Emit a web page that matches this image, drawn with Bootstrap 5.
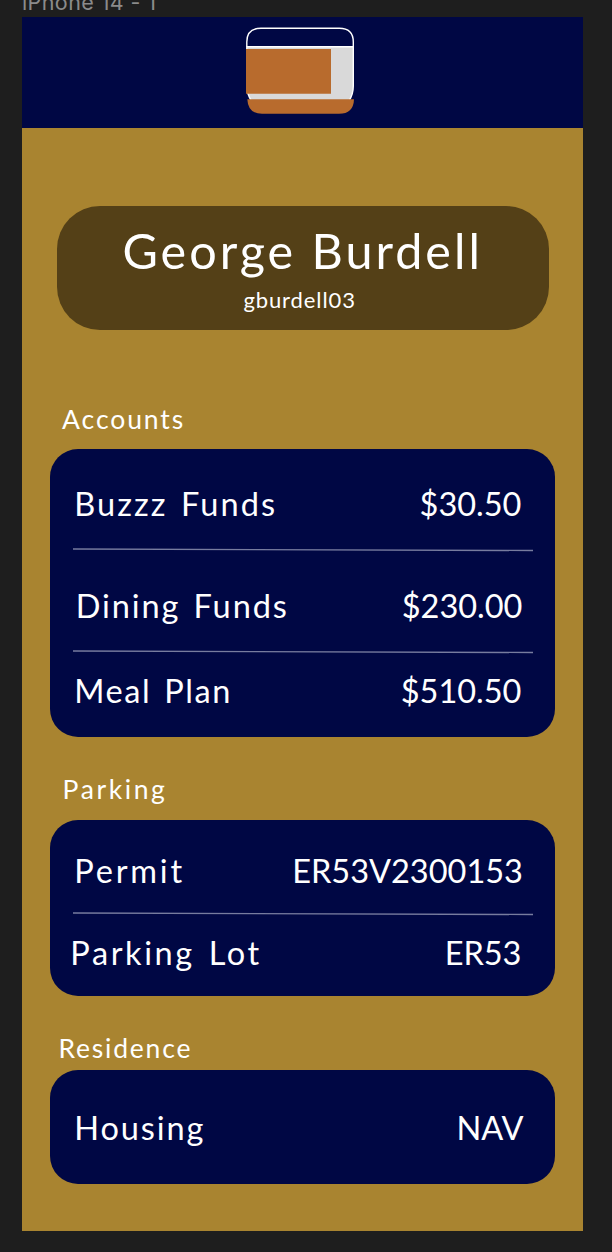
<!DOCTYPE html>
<html lang="en">
<head>
<meta charset="utf-8">
<meta name="viewport" content="width=device-width, initial-scale=1">
<title>iPhone 14 - 1</title>
<link href="https://cdn.jsdelivr.net/npm/bootstrap@5.3.0/dist/css/bootstrap.min.css" rel="stylesheet">
<style>
body{background:#1e1e1e;color:#fff;font-family:Lato,"Liberation Sans",sans-serif;height:1252px;overflow:hidden}
.frame-label{height:17px;padding-left:22px;color:#8b8b8b;font:400 21.5px/26px Inter,sans-serif;letter-spacing:.4px}
.frame-label span{margin-top:-11px;height:26px}
.phone{width:561px;height:1214px;margin-left:21.6px;background:#a98430}
.topbar{height:111px;background:#000744;padding:9px 0 0 223.4px}
.profile{width:492px;height:123.5px;margin:78px 0 0 35.8px;border-radius:43px;background:#544017;white-space:nowrap}
.profile h1{font-size:48.5px;line-height:58px;font-weight:400;margin:0;padding:15px 0 0 65px;letter-spacing:3px;word-spacing:0}
.profile p{font-size:22px;line-height:26px;padding:7.5px 0 0 186px;letter-spacing:.9px}
.group-title{font-size:26.5px;line-height:32px;font-weight:400;white-space:nowrap}
.panel{width:504.7px;margin-left:28.7px;border-radius:28px;background:#000744}
.entry{font-size:32.5px;line-height:40px;white-space:nowrap;padding:0 33.5px 0 24px;word-spacing:3px}
.rule{display:block;margin-left:22.5px}
.t1{padding-left:40.5px;margin-top:73.4px;margin-bottom:14.1px;letter-spacing:1.9px}
.t2{padding-left:41px;margin-top:36.4px;margin-bottom:15.1px;letter-spacing:2.6px}
.t3{padding-left:36.8px;margin-top:36px;margin-bottom:6.5px;letter-spacing:1.8px}
.buzzz{padding-top:35.2px;margin-bottom:23.8px}
.buzzz .key{letter-spacing:2.1px}
.dining{padding-top:34.2px;margin-bottom:24.3px;padding-left:25.5px;padding-right:32.5px}
.dining .key{letter-spacing:1.9px}
.meal{padding-top:16.7px}
.meal .key{letter-spacing:1.6px}
.permit{padding-top:30.9px;margin-bottom:21.1px;padding-right:32px}
.permit .key{letter-spacing:2.8px}
.lot{padding-top:16.6px;padding-left:20px;padding-right:33.5px}
.lot .key{letter-spacing:2.6px}
.housing{padding-top:38px;padding-right:31.5px}
.housing .key{letter-spacing:1.9px}
</style>
</head>
<body>
<div class="frame-label d-flex"><span>iPhone 14 - 1</span></div>
<main class="phone d-flex flex-column">
<header class="topbar flex-shrink-0">
<svg class="d-block" width="112" height="90" viewBox="245 26 112 90" aria-label="BuzzCard">
<path d="M246.8 46.8V42Q246.8 28.2 261 28.2H339.3Q353.3 28.2 353.3 42V46.8" fill="none" stroke="#fff" stroke-width="1.4"/>
<path d="M246.8 46.8H353.3V86Q353.3 94 349 101H251.5Q246.8 94 246.8 86Z" fill="#d9d9d9" stroke="#fff" stroke-width="1.4"/>
<path d="M246 49H331V93.7H246Z" fill="#b86b2d"/>
<path d="M247.3 99.2H354Q353.5 113.8 339 113.8H262Q248 113.8 247.3 99.2Z" fill="#b86b2d"/>
</svg>
</header>
<section class="profile flex-shrink-0"><h1>George Burdell</h1><p class="mb-0">gburdell03</p></section>
<h2 class="group-title t1">Accounts</h2>
<section class="panel" style="height:288px">
<div class="entry buzzz d-flex justify-content-between"><span class="key">Buzzz Funds</span><span>$30.50</span></div>
<svg class="rule" width="460" height="4"><path d="M0 1L460 2.5" stroke="#777c9f" stroke-width="1.4"/></svg>
<div class="entry dining d-flex justify-content-between"><span class="key">Dining Funds</span><span>$230.00</span></div>
<svg class="rule" width="460" height="4"><path d="M0 1L460 2.5" stroke="#777c9f" stroke-width="1.4"/></svg>
<div class="entry meal d-flex justify-content-between"><span class="key">Meal Plan</span><span>$510.50</span></div>
</section>
<h2 class="group-title t2">Parking</h2>
<section class="panel" style="height:175.5px">
<div class="entry permit d-flex justify-content-between"><span class="key">Permit</span><span>ER53V2300153</span></div>
<svg class="rule" width="460" height="4"><path d="M0 1L460 2.5" stroke="#777c9f" stroke-width="1.4"/></svg>
<div class="entry lot d-flex justify-content-between"><span class="key">Parking Lot</span><span>ER53</span></div>
</section>
<h2 class="group-title t3">Residence</h2>
<section class="panel" style="height:113.5px">
<div class="entry housing d-flex justify-content-between"><span class="key">Housing</span><span>NAV</span></div>
</section>
</main>
<script src="https://cdn.jsdelivr.net/npm/bootstrap@5.3.0/dist/js/bootstrap.bundle.min.js"></script>
</body>
</html>
